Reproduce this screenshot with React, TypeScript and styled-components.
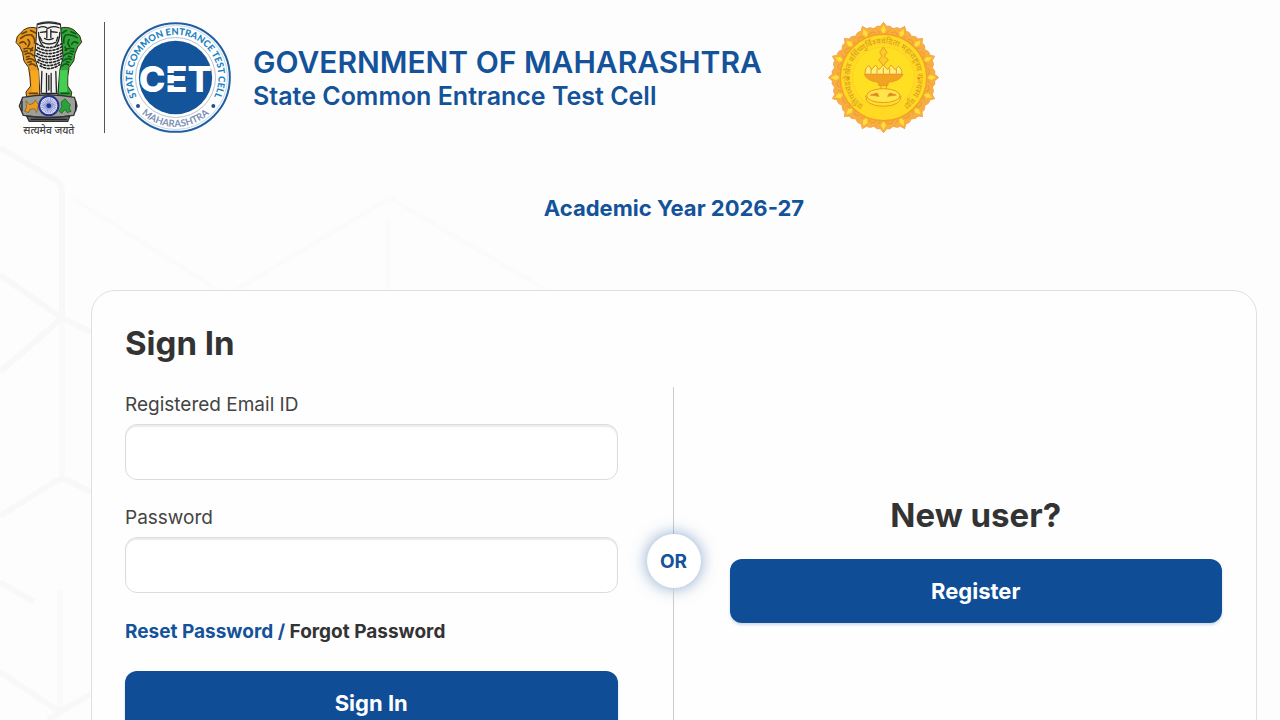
import React from "react";
import styled, { createGlobalStyle } from "styled-components";

const blue = "#0f4e96";
const textBlue = "#14529a";
const ink = "#333333";

const GlobalStyle = createGlobalStyle`
  *, *::before, *::after { box-sizing: border-box; }
  body {
    margin: 0;
    background: #fdfdfd;
    color: ${ink};
    font-family: Inter, "Liberation Sans", sans-serif;
  }
`;

const Page = styled.div`
  position: relative;
  min-height: 100vh;
  overflow: hidden;
`;

const Backdrop = styled.svg`
  position: absolute;
  top: 0;
  left: 0;
  z-index: -1;
  pointer-events: none;
`;

const Header = styled.header`
  display: flex;
  align-items: flex-start;
  padding: 20px 15px 0;
`;

const Rule = styled.span`
  width: 1px;
  height: 111px;
  margin: 2px 15px 0 21px;
  background: #555555;
`;

const Seal = styled.svg`
  flex: none;
  margin-top: 2px;
`;

const Emblem = styled.svg`
  flex: none;
`;

const Titles = styled.div`
  margin: 24px 66px 0 22px;
  color: ${textBlue};
  white-space: nowrap;
`;

const SiteTitle = styled.h1`
  margin: 0;
  font-size: 30px;
  font-weight: 600;
  line-height: 36px;
`;

const SiteSubtitle = styled.p`
  margin: 0;
  font-size: 25px;
  font-weight: 600;
  line-height: 32px;
`;

const Main = styled.main`
  padding: 55px 23px 32px 91px;
`;

const Year = styled.p`
  margin: 0 0 66px;
  color: ${textBlue};
  font-size: 22px;
  font-weight: 700;
  line-height: 32px;
  text-align: center;
`;

const Card = styled.section`
  padding: 32px 34px 36px 33px;
  border: 1px solid #e0e0e0;
  border-radius: 24px;
  background: #fefefe;
`;

const Title = styled.h2`
  margin: 0;
  font-size: 33px;
  font-weight: 700;
  line-height: 40px;
`;

const Columns = styled.div`
  display: grid;
  grid-template-columns: 1fr 112px 1fr;
  margin-top: 24px;
`;

const Form = styled.form`
  display: flex;
  flex-direction: column;
`;

const Field = styled.div`
  display: flex;
  flex-direction: column;
  margin-bottom: 20px;
`;

const Label = styled.label`
  margin-bottom: 1px;
  color: #444444;
  font-size: 19px;
  line-height: 36px;
`;

const Input = styled.input`
  height: 56px;
  padding: 0 16px;
  border: 1px solid #dcdcdc;
  border-radius: 12px;
  background: #ffffff;
  box-shadow: inset 0 2px 1px #ececec;
  font: inherit;
  font-size: 19px;
`;

const Links = styled.p`
  margin: 7px 0 27px;
  color: ${textBlue};
  font-size: 19px;
  font-weight: 700;
  line-height: 24px;
`;

const TextLink = styled.a<{ $dark?: boolean }>`
  color: ${(p) => (p.$dark ? ink : textBlue)};
  text-decoration: none;
`;

const Button = styled.button`
  width: 100%;
  height: 64px;
  border: 0;
  border-radius: 12px;
  background: ${blue};
  box-shadow: 0 2px 3px rgba(15, 78, 150, 0.2);
  color: #ffffff;
  font: inherit;
  font-size: 22px;
  font-weight: 700;
`;

const Divider = styled.div`
  display: flex;
  flex-direction: column;
  align-items: center;

  &::before,
  &::after {
    content: "";
    flex: 1;
    width: 1px;
    background: #cccccc;
  }
`;

const Or = styled.span`
  display: grid;
  place-items: center;
  width: 54px;
  height: 54px;
  border-radius: 50%;
  background: #ffffff;
  box-shadow: 0 0 16px rgba(15, 78, 150, 0.5);
  color: ${textBlue};
  font-size: 19px;
  font-weight: 700;
`;

const NewUser = styled.div`
  display: flex;
  flex-direction: column;
  justify-content: center;
  gap: 24px;
  padding-bottom: 4px;
  text-align: center;
`;

const range = (n: number) => Array.from({ length: n }, (_, i) => i);

function HexBackdrop() {
  return (
    <Backdrop width="640" height="720" viewBox="0 0 640 720" fill="none" aria-hidden="true">
      <g stroke="#f8f8f8" strokeWidth="6">
        <path d="M0 148 56 180Q62 184 62 192V318M0 275 62 318 91 332M62 318 0 372" />
        <path d="M0 516 56 481Q62 478 69 481L91 492M0 582 34 602M0 672 60 712 91 694M60 712 48 720" />
        <path d="M62 318V480" opacity=".7" />
        <path d="M60 590V712" opacity=".7" />
      </g>
      <g stroke="#fbfbfb" strokeWidth="5">
        <path d="M72 198 218 290M236 290 390 198 546 290M388 220V290" />
      </g>
    </Backdrop>
  );
}

function AshokaEmblem() {
  return (
    <Emblem width="68" height="117" viewBox="45 30 205 350" role="img" aria-label="State Emblem of India">
      <g stroke="#3b2a12" strokeWidth="3" strokeLinejoin="round">
        <path fill="#e8991f" d="M112 54Q92 46 72 58L52 78 48 96 60 110 68 128 72 152 86 172 90 200 92 228 78 246 80 260H120L124 200 116 160Z" />
        <path fill="#35a33c" d="M180 54Q200 46 222 58L240 76 246 96 234 110 226 130 222 152 208 172 204 200 204 228 216 246 214 260H174L170 200 178 160Z" />
        <path fill="#f2f2f0" stroke="#222" d="M112 40Q146 28 182 40L186 96 190 140 180 180 174 256H120L116 180 104 140 108 96Z" />
      </g>
      <path fill="#f7a81f" d="M92 180H116L118 246H96Z" />
      <path fill="#45cf52" d="M180 180H203L202 246H178Z" />
      <g fill="none" stroke="#6b430c" strokeWidth="5" strokeLinecap="round">
        <path d="M62 84Q78 70 96 74M60 98Q74 90 78 102M84 88Q94 98 84 108M72 116Q86 110 98 120M76 132Q90 124 100 136M80 148Q92 140 104 152M88 164Q98 156 108 168M96 76Q106 84 104 98M88 250H112M92 60 108 68M66 70 80 64M92 122 98 112M72 124 82 122M80 140 88 138M84 156 94 154" />
      </g>
      <g fill="none" stroke="#0d5a18" strokeWidth="5" strokeLinecap="round">
        <path d="M232 82Q216 70 198 74M234 98Q220 90 216 102M208 88Q200 98 210 108M222 116Q208 110 196 120M218 132Q204 124 192 136M214 148Q202 140 190 152M206 164Q196 156 186 168M196 76Q190 84 192 98M184 250H208M200 60 188 68M228 70 214 64M200 120 196 110M222 124 212 122M214 140 206 138M208 156 200 154" />
      </g>
      <g fill="none" stroke="#242424" strokeWidth="4" strokeLinecap="round">
        <path d="M114 42Q146 32 180 42M116 52Q132 44 144 54 158 44 178 52M122 66 138 64M156 64 172 66M141 58V82M153 58V82M134 84Q147 92 160 84M128 96Q147 106 168 96M116 66Q116 92 130 108M180 66Q180 92 166 108M120 80 126 92M174 80 170 92" />
        <g strokeWidth="5">
          <path strokeDasharray="5 6" d="M110 100Q146 124 186 100M108 118Q146 142 188 118M108 136Q146 160 188 136M112 154Q146 178 184 154" />
          <path strokeDasharray="6 6" strokeDashoffset="6" d="M108 109Q146 133 187 109M107 127Q146 151 189 127M110 145Q146 169 186 145M116 163Q146 187 180 163" />
        </g>
        <path d="M126 184 124 246M140 190V246M154 190V246M168 184 170 246M124 250H172M147 196V240" />
      </g>
      <g stroke="#333" strokeWidth="4">
        <path fill="#9da09a" d="M68 262Q146 246 224 262L232 288 222 316Q146 328 70 316L58 288Z" />
        <path fill="#666a68" d="M80 318Q146 328 210 318L204 334H88Z" />
      </g>
      <path fill="#eb9b22" stroke="#7b5719" strokeWidth="2" d="M78 272 88 284 100 280 106 270 116 284 110 308 104 296 90 298 86 308 74 304 80 292Z" />
      <path fill="#29a23a" stroke="#0d5a18" strokeWidth="2" d="M184 276 196 266 204 276 212 284 208 294 214 304 202 308 196 298 186 310 178 304 186 290Z" />
      <path fill="none" stroke="#222" strokeWidth="4" d="M66 272V304M228 272V304M92 328H202" />
      <circle cx="147" cy="287" r="29" fill="#e6e9fb" stroke="#26318f" strokeWidth="6" />
      <g stroke="#6b78c6" strokeWidth="2">
        {range(24).map((i) => (
          <path key={i} d="M147 287V263" transform={`rotate(${i * 15} 147 287)`} />
        ))}
      </g>
      <circle cx="147" cy="287" r="7" fill="#202e8c" />
      <text x="147" y="371" textAnchor="middle" fontSize="31" fontWeight="500" fill="#444" fontFamily="'Noto Sans', 'Noto Sans Devanagari', sans-serif">
        सत्यमेव जयते
      </text>
    </Emblem>
  );
}

function CetSeal() {
  return (
    <Seal width="111" height="111" viewBox="30 36 333 333" role="img" aria-label="State Common Entrance Test Cell">
      <defs>
        <path id="cet-top" d="M96 284A129 129 0 1 1 297 284" />
        <path id="cet-bottom" d="M60 260A148 148 0 0 0 333 260" />
      </defs>
      <circle cx="196.500" cy="202.500" r="163" fill="#fff" stroke="#215f9f" strokeWidth="6" />
      <circle cx="196.500" cy="202.500" r="156" fill="none" stroke="#9fc3e2" strokeWidth="2" />
      <circle cx="196.500" cy="202.500" r="120" fill="none" stroke="#b7c3d1" strokeWidth="3" />
      <circle cx="196.500" cy="202.500" r="110" fill="#14549b" />
      <text fontSize="28" fontWeight="900" fill="#2182c1" fontFamily="Lato, sans-serif">
        <textPath href="#cet-top" startOffset="50%" textAnchor="middle">STATE COMMON ENTRANCE TEST CELL</textPath>
      </text>
      <text fontSize="29" fontWeight="700" fill="#8090b4" fontFamily="Lato, sans-serif">
        <textPath href="#cet-bottom" startOffset="50%" textAnchor="middle">MAHARASHTRA</textPath>
      </text>
      <circle cx="84" cy="288" r="6" fill="#214f8f" />
      <circle cx="310" cy="288" r="6" fill="#214f8f" />
      <text x="196" y="247" textAnchor="middle" fontSize="108" fontWeight="800" fill="#fff" fontFamily="Inter, sans-serif">CET</text>
      <path d="M164 192H232M164 223H232" stroke="#14549b" strokeWidth="6" />
    </Seal>
  );
}

function MaharashtraSeal() {
  return (
    <Seal width="111" height="111" viewBox="21 21 333 333" role="img" aria-label="Seal of Maharashtra">
      <defs>
        <path id="mh-ring" d="M187 290A102 102 0 1 1 188 290" />
      </defs>
      {range(16).map((i) => (
        <g key={i} transform={`rotate(${i * 22.5} 187.500 187.500)`}>
          <path d="M150 62Q148 44 160 40 168 30 178 34L187.500 22 197 34Q207 30 215 40 227 44 225 62L212 82H163Z" fill="#f8b03a" stroke="#f5a650" strokeWidth="3" />
          <path d="M187.500 30 195 44 187.500 58 180 44Z" fill="#ffe03a" />
          <path d="M158 56Q168 42 178 54M217 56Q207 42 197 54" fill="none" stroke="#f09a42" strokeWidth="4" />
        </g>
      ))}
      <circle cx="187.500" cy="187.500" r="130" fill="#ffd922" stroke="#f3a228" strokeWidth="5" />
      <circle cx="187.500" cy="187.500" r="92" fill="#ffdf22" stroke="#f8cb2c" strokeWidth="2" />
      <text fontSize="24" fontWeight="500" fill="#dba024" fontFamily="'Noto Sans', 'Noto Sans Devanagari', sans-serif">
        <textPath href="#mh-ring" startOffset="50%" textAnchor="middle">प्रतिपच्चंद्रलेखेव वर्धिष्णुर्विश्ववंदिता महाराष्ट्रस्य राज्यस्य मुद्रा</textPath>
      </text>
      <g fill="none" stroke="#e9982a" strokeWidth="3" strokeLinejoin="round">
        <path d="M187 96 198 112 190 124 202 134 187 152 173 134 184 124 176 112Z" fill="#fbcb2a" />
        <path d="M132 178Q132 156 144 152L152 164 164 150 174 164 187 150 200 164 210 150 222 164 232 154Q244 160 242 178Z" fill="#fff07a" />
        <path d="M130 178H246Q238 198 202 202L200 212H174L172 202Q138 198 130 178Z" fill="#f3a321" />
        <path d="M150 176V160M168 176V160M187 176V158M206 176V160M226 176V162" />
        <path d="M180 212V226M196 212V226" />
        <ellipse cx="187" cy="242" rx="50" ry="21" fill="#ffe54a" />
        <path d="M134 242Q132 272 187 274 242 272 240 242" />
        <path d="M148 240 168 234 174 244ZM226 240 206 234 200 244Z" fill="#e5791d" />
      </g>
      <circle cx="82" cy="190" r="4" fill="#e58e1d" />
      <circle cx="293" cy="190" r="4" fill="#e58e1d" />
    </Seal>
  );
}

export default function App() {
  return (
    <>
      <GlobalStyle />
      <Page>
        <HexBackdrop />
        <Header>
          <AshokaEmblem />
          <Rule />
          <CetSeal />
          <Titles>
            <SiteTitle>GOVERNMENT OF MAHARASHTRA</SiteTitle>
            <SiteSubtitle>State Common Entrance Test Cell</SiteSubtitle>
          </Titles>
          <MaharashtraSeal />
        </Header>
        <Main>
          <Year>Academic Year 2026-27</Year>
          <Card>
            <Title>Sign In</Title>
            <Columns>
              <Form onSubmit={(e) => e.preventDefault()}>
                <Field>
                  <Label htmlFor="email">Registered Email ID</Label>
                  <Input id="email" type="email" />
                </Field>
                <Field>
                  <Label htmlFor="password">Password</Label>
                  <Input id="password" type="password" />
                </Field>
                <Links>
                  <TextLink href="#reset">Reset Password</TextLink> /{" "}
                  <TextLink href="#forgot" $dark>Forgot Password</TextLink>
                </Links>
                <Button type="submit">Sign In</Button>
              </Form>
              <Divider>
                <Or>OR</Or>
              </Divider>
              <NewUser>
                <Title>New user?</Title>
                <Button type="button">Register</Button>
              </NewUser>
            </Columns>
          </Card>
        </Main>
      </Page>
    </>
  );
}
